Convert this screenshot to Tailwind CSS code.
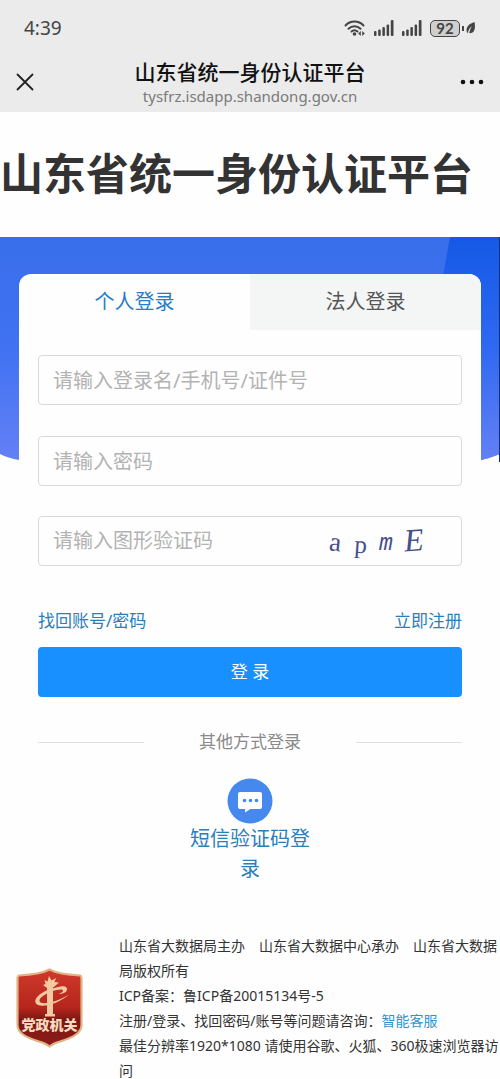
<!DOCTYPE html>
<html lang="zh-CN">
<head>
    <meta charset="UTF-8">
    <meta name="viewport" content="width=device-width, initial-scale=1.0">
    <script src="https://cdn.jsdelivr.net/npm/@tailwindcss/browser@4"></script>
    <title>山东省统一身份认证平台</title>
</head>
<body class="h-screen overflow-hidden bg-[#fefefe] text-[#333] font-['Noto_Sans','Noto_Sans_CJK_SC',sans-serif]">
    <!-- 顶部栏 -->
    <header class="h-28 bg-[#ebebeb] flex flex-col">
        <div class="h-14 px-6 flex items-center justify-between text-[#444]">
            <span class="text-[19px]">4:39</span>
            <div class="flex items-center gap-2">
                <svg class="w-[22px] h-4" viewBox="0 0 22 16" fill="none" stroke="#444" stroke-width="2" stroke-linecap="round">
                    <path d="M1.500 5.500C6.500 .3 14.500 .3 19.500 5.500M4.500 8.800C8 5.400 13 5.400 16.500 8.800M7.500 11.500C9.400 9.900 11.600 9.900 13.500 11.500"/>
                    <circle cx="10.500" cy="14" r="1.800" fill="#444" stroke="none"/>
                    <path d="M16.800 11v5L14.200 13.500zM18.200 11v5L20.800 13.500z" fill="#444" stroke="none"/>
                </svg>
                <svg class="w-5 h-4" viewBox="0 0 20 16" fill="#444">
                    <rect x="0" y="11" width="2.500" height="5" rx="1"/><rect x="4.200" y="9.500" width="2.500" height="6.500" rx="1"/><rect x="8.400" y="7" width="2.500" height="9" rx="1"/><rect x="12.600" y="4.500" width="2.500" height="11.500" rx="1"/><rect x="16.800" y="0" width="2.700" height="16" rx="1"/>
                </svg>
                <svg class="w-5 h-4" viewBox="0 0 20 16" fill="#444">
                    <rect x="0" y="11" width="2.500" height="5" rx="1"/><rect x="4.200" y="9.500" width="2.500" height="6.500" rx="1"/><rect x="8.400" y="7" width="2.500" height="9" rx="1"/><rect x="12.600" y="4.500" width="2.500" height="11.500" rx="1"/><rect x="16.800" y="0" width="2.700" height="16" rx="1"/>
                </svg>
                <div class="flex items-center gap-[2px]">
                    <span class="w-[30px] h-[17px] rounded-[5px] border border-[#444] bg-[#cfcfcf] flex items-center justify-center font-[Lato] text-[15px] leading-none font-bold">92</span>
                    <span class="w-[2px] h-[5px] bg-[#444]"></span>
                    <svg class="w-[10px] h-3" viewBox="0 0 10 12" fill="#444">
                        <path d="M8.500 0C3.500 1.500 0 4.500 .6 9.500L2 11.500C2 8.500 3.500 6 6 4 4.500 6.500 3.500 9 3.300 11.300 8.500 11.500 9.800 6.500 8.500 0z"/>
                    </svg>
                </div>
            </div>
        </div>
        <div class="h-[52px] px-4 flex items-center justify-between">
            <button aria-label="关闭" class="w-8 flex">
                <svg class="w-[18px] h-[18px]" viewBox="0 0 18 18" stroke="#222" stroke-width="1.800" stroke-linecap="round"><path d="M1.500 1.500l15 15M16.500 1.500l-15 15"/></svg>
            </button>
            <div class="text-center">
                <div class="text-[21px] leading-7 font-medium text-[#111]">山东省统一身份认证平台</div>
                <div class="text-[15px] leading-5 text-[#7a7a7a]">tysfrz.isdapp.shandong.gov.cn</div>
            </div>
            <button aria-label="更多" class="w-8 flex justify-end">
                <svg class="w-6 h-5" viewBox="0 0 24 20" fill="#111"><circle cx="3" cy="10" r="2.300"/><circle cx="12" cy="10" r="2.300"/><circle cx="21" cy="10" r="2.300"/></svg>
            </button>
        </div>
    </header>

    <h1 class="h-[125px] flex items-center text-[43px] font-bold whitespace-nowrap">山东省统一身份认证平台</h1>

    <main class="relative px-[19px] pt-[37px]">
        <!-- 蓝色背景 -->
        <svg class="absolute inset-x-0 top-0 w-full h-[225px]" viewBox="0 0 500 225" preserveAspectRatio="none">
            <defs>
                <linearGradient id="sky" x1="0" y1="0" x2="0" y2="1">
                    <stop offset="0" stop-color="#396eea"/>
                    <stop offset="0.500" stop-color="#4072f2"/>
                    <stop offset="1" stop-color="#6480f5"/>
                </linearGradient>
                <linearGradient id="beam" x1="0" y1="0" x2="0" y2="1">
                    <stop offset="0" stop-color="#1459e6"/>
                    <stop offset="0.500" stop-color="#2f69f2"/>
                    <stop offset="1" stop-color="#6480f5"/>
                </linearGradient>
            </defs>
            <path d="M0 0H500V217Q490 221 481 223H19Q8 221 0 217z" fill="url(#sky)"/>
            <path d="M450 0H500V217Q490 221 481 223H410z" fill="url(#beam)"/>
            <path d="M499 0h1v225h-1z" fill="#15306f"/>
        </svg>

        <div class="relative bg-[#fefefe] rounded-t-xl overflow-hidden">
            <div class="flex h-14 text-xl">
                <button class="flex-1 text-[#2a7dc4]">个人登录</button>
                <button class="flex-1 bg-[#f4f5f5] text-[#555]">法人登录</button>
            </div>

            <form class="px-[19px] pt-[25px]">
                <input type="text" aria-label="登录名" placeholder="请输入登录名/手机号/证件号" class="block w-full h-[50px] mb-[31px] px-[14px] border border-[#d9d9d9] rounded text-xl placeholder:text-[#b3b3b3]">
                <input type="password" aria-label="密码" placeholder="请输入密码" class="block w-full h-[50px] mb-[30px] px-[14px] border border-[#d9d9d9] rounded text-xl placeholder:text-[#b3b3b3]">
                <div class="flex items-center h-[50px] pl-[14px] pr-8 border border-[#d9d9d9] rounded">
                    <input type="text" aria-label="图形验证码" placeholder="请输入图形验证码" class="flex-1 min-w-0 text-xl placeholder:text-[#b3b3b3]">
                    <!-- 验证码 -->
                    <svg class="w-[110px] h-12" viewBox="0 0 110 48" fill="#46508a" font-family="'Liberation Serif', serif">
                        <text x="10" y="34" font-size="27" transform="rotate(6 16 30)">a</text>
                        <text x="35" y="36" font-size="25" transform="rotate(4 41 36)">p</text>
                        <text x="60" y="33" font-size="23" font-family="'Liberation Mono', monospace" font-style="italic">m</text>
                        <text x="85" y="34" font-size="32" font-style="italic" transform="rotate(-4 94 24)">E</text>
                    </svg>
                </div>

                <div class="flex justify-between mt-[42px] mb-[13px] text-[17px] leading-[26px] text-[#2a7fb8]">
                    <a href="#">找回账号/密码</a>
                    <a href="#">立即注册</a>
                </div>
                <button type="submit" class="block w-full h-[50px] rounded bg-[#1890ff] text-white text-[17px]">登 录</button>
            </form>

            <div class="px-[19px] mt-8 flex items-center justify-between text-[17px] leading-[26px] text-[#8a8a8a]">
                <span class="w-1/4 h-px bg-[#e2e2e2]"></span>
                <span>其他方式登录</span>
                <span class="w-1/4 h-px bg-[#e2e2e2]"></span>
            </div>

            <a href="#" class="mt-[23px] mx-auto w-[124px] flex flex-col items-center text-center text-xl leading-[30px] text-[#2a7fb8]">
                <svg class="w-[46px] h-[46px]" viewBox="0 0 46 46">
                    <circle cx="23" cy="23" r="22.500" fill="#4589ee"/>
                    <path d="M13 14h20q2 0 2 2v13q0 2-2 2h-9.500L18 34.500V31h-5q-2 0-2-2V16q0-2 2-2z" fill="#fff"/>
                    <g fill="#4589ee"><circle cx="17.500" cy="22.500" r="1.800"/><circle cx="23.500" cy="22.500" r="1.800"/><circle cx="29.500" cy="22.500" r="1.800"/></g>
                </svg>
                短信验证码登录
            </a>
        </div>
    </main>

    <footer class="mt-[49px] pl-4 flex items-start gap-9 text-sm leading-[25px] text-[#333]">
        <!-- 党政机关标识 -->
        <svg class="shrink-0 w-[67px] h-20 mt-[35px]" viewBox="0 0 67 80">
            <defs>
                <linearGradient id="shield" x1="0" y1="0" x2="0" y2="1">
                    <stop offset="0" stop-color="#d0392a"/>
                    <stop offset="0.500" stop-color="#b5261d"/>
                    <stop offset="0.650" stop-color="#7d1715"/>
                    <stop offset="1" stop-color="#8e1c18"/>
                </linearGradient>
            </defs>
            <path d="M33.500 1.500C42 6 54 7 64 7.500Q65.500 8 65.500 11V57C65.500 67 52 71 44 73.500Q37 75.500 33.500 78.500Q30 75.500 23 73.500C15 71 1.500 67 1.500 57V11Q1.500 8 3 7.500C13 7 25 6 33.500 1.500z" fill="url(#shield)" stroke="#dfb384" stroke-width="2.200"/>
            <!-- 华表 -->
            <g fill="#f3c9a2">
                <path d="M28.500 12l3 1.500L33 8l2.500 4.500L40 10l-1.500 4 4.500.5-4 3.500-2 1.500V46h2v2.500H29V46h2V20l-4-3 2.500-1z"/>
                <path d="M45 18.500c3.500-.8 6 .2 6 2.700 0 2.800-4 4.800-8.500 4.800 3-1.200 5-2.500 4.500-3.800-.8-1.500-6-.7-11 1.100C29 26 23 30 23.500 33c1 4.500 16 2 29.500-6.500C42 36.500 22 41.500 19.500 34.500 18 28.500 29 21 45 18.500z"/>
            </g>
            <text x="33.500" y="62" text-anchor="middle" font-size="14" font-weight="900" fill="#f7d9bd">党政机关</text>
        </svg>
        <div class="flex-1 min-w-0">
            <p>山东省大数据局主办&emsp;山东省大数据中心承办&emsp;山东省大数据局版权所有</p>
            <p>ICP备案：鲁ICP备20015134号-5</p>
            <p>注册/登录、找回密码/账号等问题请咨询：<a href="#" class="text-[#2f93cf]">智能客服</a></p>
            <p>最佳分辨率1920*1080 请使用谷歌、火狐、360极速浏览器访问</p>
        </div>
    </footer>
</body>
</html>
